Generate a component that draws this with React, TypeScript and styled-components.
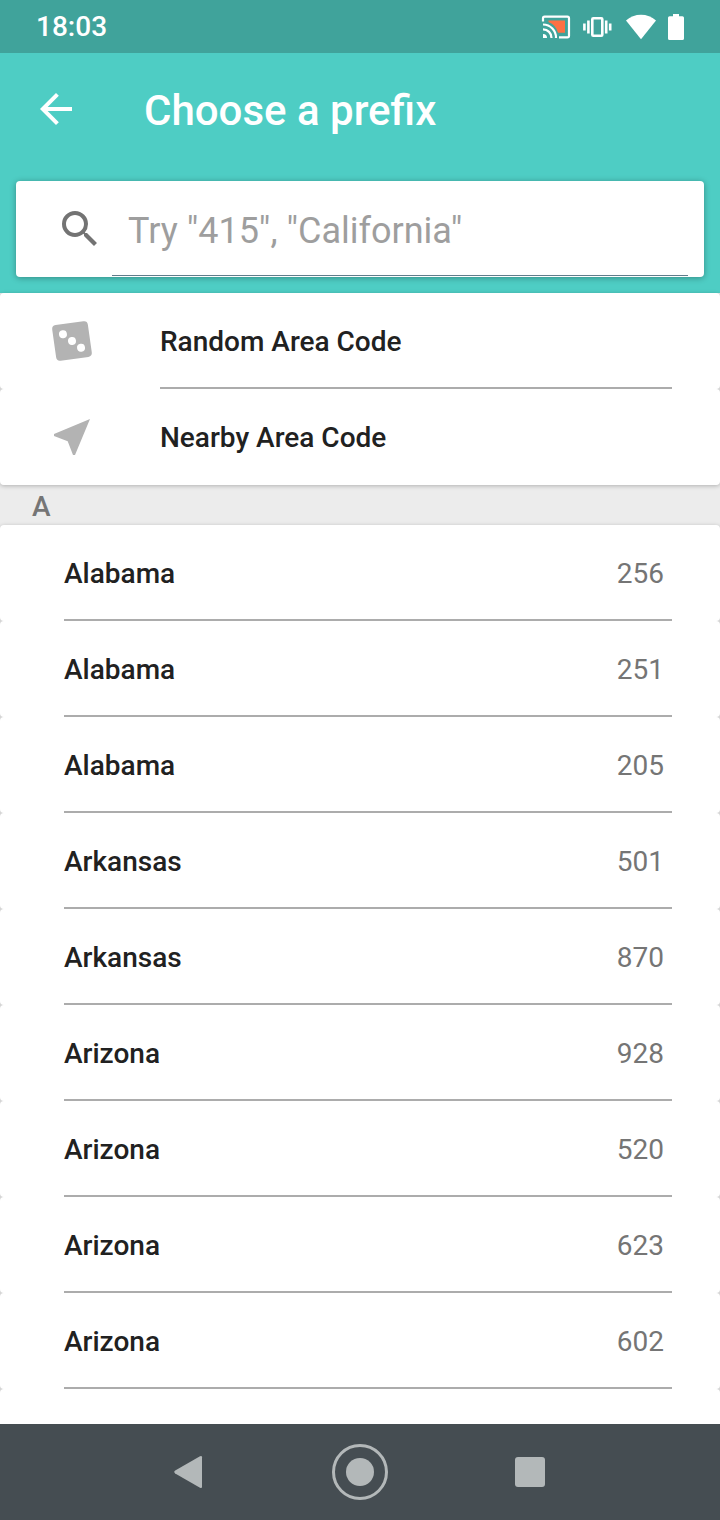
import React from "react";
import styled, { createGlobalStyle } from "styled-components";

const GlobalStyle = createGlobalStyle`
  * { box-sizing: border-box; }
  body { margin: 0; font-family: Roboto, "Noto Sans", sans-serif; background: #ececec; }
  button, input { font: inherit; }
`;

const Screen = styled.div`
  min-height: 100vh;
  display: flex;
  flex-direction: column;
`;

const StatusBar = styled.div`
  display: flex;
  align-items: center;
  justify-content: space-between;
  height: 53px;
  padding: 0 35px 0 36px;
  background: #40a39b;
  color: #fff;
  font-size: 28px;
  font-weight: 500;
`;

const StatusIcons = styled.div`
  display: flex;
  align-items: center;
  gap: 10px;
  svg { display: block; }
`;

const Hero = styled.header`
  background: #4ecdc4;
`;

const AppBar = styled.div`
  display: flex;
  align-items: center;
  gap: 64px;
  height: 112px;
  padding: 0 32px;
`;

const IconButton = styled.button`
  display: flex;
  padding: 0;
  border: 0;
  background: none;
  color: #fff;
  cursor: pointer;
`;

const Title = styled.h1`
  margin: 0;
  padding-top: 4px;
  color: #fff;
  font-size: 42px;
  line-height: 48px;
  font-weight: 500;
`;

const SearchCard = styled.label`
  display: flex;
  align-items: center;
  height: 96px;
  margin: 16px;
  padding: 0 16px 0 40px;
  border-radius: 4px;
  background: #fff;
  color: #737373;
  box-shadow: 0 1px 6px rgba(0, 0, 0, 0.32);
`;

const SearchInput = styled.input`
  flex: 1;
  min-width: 0;
  height: 94px;
  margin-left: 8px;
  padding: 4px 16px 0;
  border: 0;
  border-bottom: 1px solid #607d8b;
  outline: 0;
  background: none;
  color: #212121;
  font-size: 36px;
  &::placeholder { color: #9e9e9e; opacity: 1; }
`;

const List = styled.ul<{ $grow?: boolean }>`
  flex: ${(p) => (p.$grow ? "1 0 auto" : "none")};
  display: flex;
  flex-direction: column;
  margin: 0;
  padding: 0;
  list-style: none;
  background: #d5d5d5;
  border-radius: ${(p) => (p.$grow ? "4px 4px 0 0" : "4px")};
  box-shadow: 0 1px 4px rgba(0, 0, 0, 0.25);
`;

const Item = styled.li<{ $grow?: boolean }>`
  flex: ${(p) => (p.$grow ? "1 0 auto" : "none")};
  background: #fff;
  border-radius: ${(p) => (p.$grow ? "4px 4px 0 0" : "4px")};
`;

const Row = styled.button`
  display: flex;
  width: 100%;
  height: 96px;
  padding: 0 48px 0 0;
  border: 0;
  background: none;
  color: #212121;
  font-size: 28px;
  font-weight: 500;
  text-align: left;
  cursor: pointer;
`;

const RowIcon = styled.span`
  display: flex;
  align-items: center;
  align-self: center;
  padding-left: 48px;
  width: 160px;
  color: #b3b3b3;
`;

const RowBody = styled.span<{ $inset?: boolean; $divider?: boolean }>`
  flex: 1;
  display: flex;
  align-items: center;
  justify-content: space-between;
  align-self: stretch;
  margin-left: ${(p) => (p.$inset ? "64px" : "0")};
  padding: 2px 8px 0 0;
  border-bottom: 2px solid ${(p) => (p.$divider ? "#acacac" : "transparent")};
`;

const Code = styled.span`
  color: #757575;
  font-weight: 400;
`;

const SectionTitle = styled.h2`
  height: 40px;
  margin: 0;
  padding: 2px 32px 0;
  color: #757575;
  font-size: 28px;
  line-height: 40px;
  font-weight: 500;
`;

const NavBar = styled.nav`
  display: flex;
  align-items: center;
  justify-content: center;
  gap: 114px;
  height: 96px;
  background: #454d52;
  position: relative;
`;

const NavButton = styled(IconButton)`
  width: 56px;
  height: 56px;
  color: #b3b8b9;
`;

const codes: [string, string][] = [
  ["Alabama", "256"],
  ["Alabama", "251"],
  ["Alabama", "205"],
  ["Arkansas", "501"],
  ["Arkansas", "870"],
  ["Arizona", "928"],
  ["Arizona", "520"],
  ["Arizona", "623"],
  ["Arizona", "602"],
];

const CastIcon = () => (
  <svg width="32" height="24" viewBox="0 0 32 24" fill="none" stroke="#fff" strokeWidth="2.2">
    <path d="M7.5 5.5H24v12.200H17Q15 10 7.500 7z" fill="#ff7043" stroke="none" />
    <path d="M2 6.500V3.200Q2 1.600 3.600 1.600h22.800Q28 1.600 28 3.200v17.600q0 1.600-1.600 1.600H18" />
    <path d="M2 9.500A13 13 0 0 1 15 23M2 14.300A8.500 8.500 0 0 1 10.500 23" />
    <path d="M2 19a4 4 0 0 1 4 4H2z" fill="#fff" stroke="none" />
  </svg>
);

const VibrateIcon = () => (
  <svg width="32" height="22" viewBox="0 0 32 22" fill="none" stroke="#fff">
    <rect x="9.300" y="2.300" width="10" height="17.400" rx="1" strokeWidth="2.600" />
    <path d="M5.400 4.500v13M23.200 4.500v13M1.400 7.500v7M27.200 7.500v7" strokeWidth="2.600" />
  </svg>
);

const WifiIcon = () => (
  <svg width="32" height="26" viewBox="0 0 32 26" fill="#fff">
    <path d="M1 6.400Q7.500.8 16 .8t15 5.600L16 25.200z" />
  </svg>
);

const BatteryIcon = () => (
  <svg width="18" height="26" viewBox="1 0 18 26" fill="#fff">
    <path d="M7 0h6v2.200h3.400Q18 2.200 18 3.800v20.600Q18 26 16.400 26H3.600Q2 26 2 24.400V3.800Q2 2.200 3.600 2.200H7z" />
  </svg>
);

const BackIcon = () => (
  <svg width="48" height="48" viewBox="0 0 24 24" fill="currentColor">
    <path d="M20 11H7.830l5.590-5.590L12 4l-8 8 8 8 1.410-1.410L7.830 13H20z" />
  </svg>
);

const SearchIcon = () => (
  <svg width="48" height="48" viewBox="0 0 24 24" fill="currentColor">
    <path d="M15.500 14h-.790l-.280-.270A6.471 6.471 0 0 0 16 9.500 6.500 6.500 0 1 0 9.500 16c1.610 0 3.090-.590 4.230-1.570l.270.280v.790l5 4.990L20.490 19zm-6 0C7.010 14 5 11.990 5 9.500S7.010 5 9.500 5 14 7.010 14 9.500 11.990 14 9.500 14z" />
  </svg>
);

const DiceIcon = () => (
  <svg width="48" height="48" viewBox="0 0 48 48" fill="currentColor">
    <g transform="rotate(-8 24 24)">
      <rect x="6" y="6" width="36" height="36" rx="4" />
      <g fill="#fff">
        <circle cx="16" cy="16" r="4" />
        <circle cx="24" cy="24" r="4" />
        <circle cx="32" cy="32" r="4" />
      </g>
    </g>
  </svg>
);

const NearbyIcon = () => (
  <svg width="48" height="48" viewBox="0 0 48 48" fill="currentColor">
    <path d="M42 6 6 21v2l13.700 5.300L25 42h2z" />
  </svg>
);

export default function App() {
  return (
    <Screen>
      <GlobalStyle />
      <StatusBar>
        <span>18:03</span>
        <StatusIcons>
          <CastIcon />
          <VibrateIcon />
          <WifiIcon />
          <BatteryIcon />
        </StatusIcons>
      </StatusBar>
      <Hero>
        <AppBar>
          <IconButton aria-label="Back">
            <BackIcon />
          </IconButton>
          <Title>Choose a prefix</Title>
        </AppBar>
        <SearchCard>
          <SearchIcon />
          <SearchInput type="text" aria-label="Search area codes" placeholder={'Try "415", "California"'} />
        </SearchCard>
      </Hero>
      <List>
        <Item>
          <Row>
            <RowIcon><DiceIcon /></RowIcon>
            <RowBody $divider>Random Area Code</RowBody>
          </Row>
        </Item>
        <Item>
          <Row>
            <RowIcon><NearbyIcon /></RowIcon>
            <RowBody>Nearby Area Code</RowBody>
          </Row>
        </Item>
      </List>
      <SectionTitle>A</SectionTitle>
      <List $grow>
        {codes.map(([state, code]) => (
          <Item key={code}>
            <Row>
              <RowBody $inset $divider>
                {state}
                <Code>{code}</Code>
              </RowBody>
            </Row>
          </Item>
        ))}
        <Item $grow aria-hidden="true" />
      </List>
      <NavBar>
        <NavButton aria-label="Back">
          <svg width="56" height="56" viewBox="0 0 56 56" fill="currentColor">
            <path d="M13.200 26.600 38 12.300q2-1 2 1v29.400q0 2-2 1L13.200 29.400q-2-1.400 0-2.800z" />
          </svg>
        </NavButton>
        <NavButton aria-label="Home">
          <svg width="56" height="56" viewBox="0 0 56 56" fill="currentColor">
            <circle cx="28" cy="28" r="14" />
            <circle cx="28" cy="28" r="26.500" fill="none" stroke="currentColor" strokeWidth="3" />
          </svg>
        </NavButton>
        <NavButton aria-label="Recent apps">
          <svg width="56" height="56" viewBox="0 0 56 56" fill="currentColor">
            <rect x="13" y="13" width="30" height="30" rx="3" />
          </svg>
        </NavButton>
      </NavBar>
    </Screen>
  );
}
